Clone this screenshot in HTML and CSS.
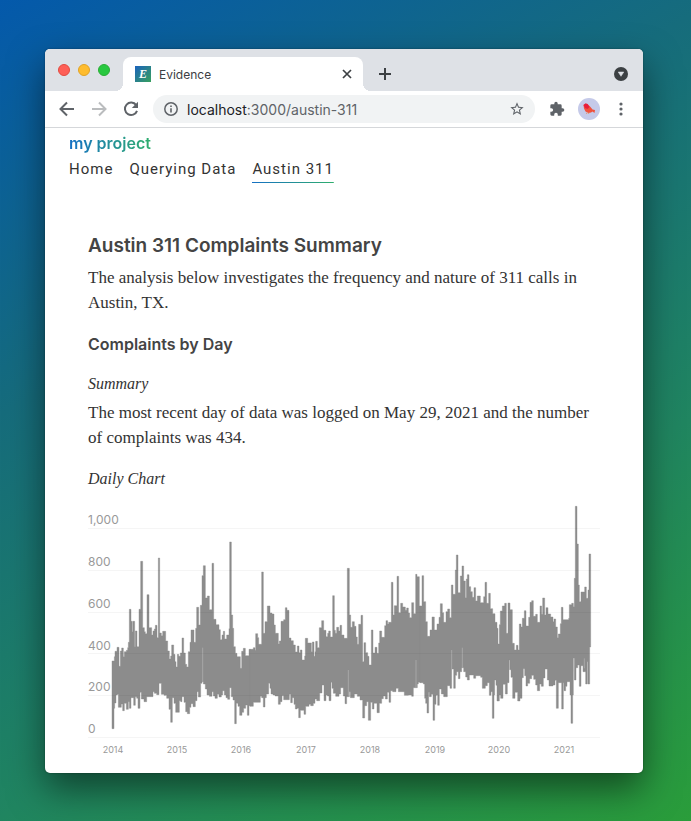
FILE: index.html
```html
<!DOCTYPE html>
<html lang="en">
<head>
<meta charset="utf-8">
<meta name="viewport" content="width=device-width, initial-scale=1">
<title>Evidence</title>
<link rel="stylesheet" href="styles.css">
</head>
<body>
<div class="window">
  <header class="chrome">
    <div class="tabstrip">
      <div class="lights"><span class="light red"></span><span class="light amber"></span><span class="light green"></span></div>
      <div class="tab">
        <span class="favicon">E</span>
        <span class="tab-title">Evidence</span>
        <button class="icon-btn close" aria-label="Close tab"><svg width="10" height="10" viewBox="0 0 10 10"><path d="M1 1l8 8M9 1l-8 8" stroke="#3c4043" stroke-width="1.7"/></svg></button>
      </div>
      <button class="icon-btn plus" aria-label="New tab"><svg width="14" height="14" viewBox="0 0 14 14"><path d="M7 1v12M1 7h12" stroke="#3c4043" stroke-width="2"/></svg></button>
      <button class="icon-btn tab-search" aria-label="Search tabs"><svg width="14" height="14" viewBox="0 0 14 14"><circle cx="7" cy="7" r="7" fill="#3c4043"/><path d="M4.200 5h5.600L7 9.300z" fill="#dee1e6" stroke="#dee1e6" stroke-linejoin="round" stroke-width=".5"/></svg></button>
    </div>
    <div class="toolbar">
      <button class="icon-btn" aria-label="Back"><svg width="16" height="16" viewBox="0 0 16 16" fill="none" stroke="#5f6368" stroke-width="2"><path d="M15 8H2.500M8 1.500L1.500 8 8 14.500"/></svg></button>
      <button class="icon-btn" aria-label="Forward"><svg width="16" height="16" viewBox="0 0 16 16" fill="none" stroke="#babcbe" stroke-width="2"><path d="M1 8h12.500M8 1.500L14.500 8 8 14.500"/></svg></button>
      <button class="icon-btn" aria-label="Reload"><svg width="16" height="16" viewBox="0 0 16 16"><path d="M13.200 4.200A6.200 6.200 0 1 0 14 9.800" fill="none" stroke="#5f6368" stroke-width="2"/><path d="M15 .8V7H8.800z" fill="#5f6368"/></svg></button>
      <div class="address">
        <svg width="14" height="14" viewBox="0 0 14 14"><circle cx="7" cy="7" r="6.200" fill="none" stroke="#5f6368" stroke-width="1.500"/><path d="M7 6.200v4.300M7 3.400v1.600" stroke="#5f6368" stroke-width="1.600"/></svg>
        <span class="url">localhost<span class="url-path">:3000/austin-311</span></span>
        <button class="icon-btn" aria-label="Bookmark"><svg width="16" height="16" viewBox="0 0 24 24"><path fill="#5f6368" d="M22 9.240l-7.190-.62L12 2 9.190 8.630 2 9.240l5.460 4.730L5.820 21 12 17.270 18.180 21l-1.630-7.030L22 9.240zM12 15.400l-3.760 2.270 1-4.280-3.320-2.880 4.380-.38L12 6.100l1.710 4.040 4.380.38-3.320 2.880 1 4.280L12 15.400z"/></svg></button>
      </div>
      <button class="icon-btn" aria-label="Extensions"><svg width="16" height="16" viewBox="0 0 24 24"><path fill="#5f6368" d="M20.500 11H19V7a2 2 0 0 0-2-2h-4V3.500a2.500 2.500 0 0 0-5 0V5H4a2 2 0 0 0-2 2v3.800h1.500a2.700 2.700 0 0 1 0 5.400H2V20a2 2 0 0 0 2 2h3.800v-1.500a2.700 2.700 0 0 1 5.400 0V22H17a2 2 0 0 0 2-2v-4h1.500a2.500 2.500 0 0 0 0-5z"/></svg></button>
      <button class="icon-btn avatar" aria-label="Profile"><svg width="22" height="22" viewBox="0 0 22 22"><circle cx="11" cy="11" r="11" fill="#c5cae9"/><path d="M5.500 7l2-1.500 2 .5 3 3 2 2.500 2.500.5-.5 3-2-1.500-1.500 1-2.500.5-3-1.500-1.500-3z" fill="#f0523c"/><path d="M5.500 7l2-1.500 2 .5 2 3-2 2-2.500-1z" fill="#e81c3c"/><path d="M9 14.500l-.5 1.500M11 14.500l-.5 1.500" stroke="#e58a5b" stroke-width=".8"/></svg></button>
      <button class="icon-btn" aria-label="Menu"><svg width="16" height="16" viewBox="0 0 16 16" fill="#5f6368"><circle cx="8" cy="3" r="1.600"/><circle cx="8" cy="8" r="1.600"/><circle cx="8" cy="13" r="1.600"/></svg></button>
    </div>
  </header>
  <div class="site-header">
    <a class="brand" href="#">my project</a>
    <nav class="nav">
      <a href="#">Home</a>
      <a href="#">Querying Data</a>
      <a class="active" href="#" aria-current="page">Austin 311</a>
    </nav>
  </div>
  <main class="article">
    <h1>Austin 311 Complaints Summary</h1>
    <p>The analysis below investigates the frequency and nature of 311 calls in Austin, TX.</p>
    <h2>Complaints by Day</h2>
    <h3>Summary</h3>
    <p>The most recent day of data was logged on May 29, 2021 and the number of complaints was 434.</p>
    <h3>Daily Chart</h3>
    <svg class="chart" viewBox="0 0 512 262" role="img" aria-label="Daily complaints, 2014 to 2021">
      <g transform="translate(-8 0) scale(.33333)" fill="#8c8c8c" stroke="#8c8c8c" stroke-width="1.200" stroke-linejoin="round">
        <path d="M96 498H103V485H105V469H111V457H117V514H121V468H125V459H130V485H133V470H139V466H143V458H145V442H148V343H153V379H157V410H159V379H164V455H166V408H171V455H177V343H182V199H188V398H193V410H196V416H201V299H207V398H215V420H219V408H223V402H226V391H231V428H235V189H239V414H244V422H248V409H257V438H263V468H268V492H272V483H275V450H281V478H285V500H288V516H292V478H296V484H301V474H306V429H311V474H316V508H320V516H325V470H330V442H333V405H342V442H347V400H350V337H356V390H361V331H366V242H370V212H376V309H382V303H388V344H396V205H401V373H408V389H417V404H421V434H426V420H430V409H434V432H440V420H447V401H449V141H454V360H458V400H461V455H466V475H471V485H481V520H485V469H490V460H496V482H507V463H511V632H507V661H502V630H497V640H491V652H486V661H479V634H474V625H469V686H464V615H459V605H454V578H449V613H443V608H438V600H433V587H428V600H424V606H417V598H412V610H405V603H400V590H396V604H388V600H381V582H376V567H370V560H366V565H362V606H355V590H351V617H346V635H339V626H333V637H329V656H322V650H317V622H312V605H306V620H302V617H298V652H287V625H282V608H277V682H272V643H267V610H260V601H252V598H244V565H237V599H230V595H223V590H219V605H200V620H192V612H184V592H180V640H174V610H170V605H166V631H161V608H153V640H148V620H145V643H139V625H133V647H128V627H124V637H115V598H112V600H108V624H104V640H102V701H96Z"/>
        <path transform="translate(510 0)" d="M0 463H10V458H15V466H17V416H23V428H26V448H35V231H40V415H45V380H52V333H60V354H66V357H72V390H76V415H85V447H88V438H93V379H101V374H106V338H111V346H117V429H123V437H130V450H136V471H142V453H147V473H151V465H156V495H164V483H166V430H173V444H184V470H187V441H192V484H195V470H197V439H202V458H208V398H215V377H221V406H228V425H233V415H236V408H241V426H248V302H253V406H256V415H260V397H266V408H270V391H275V420H282V430H292V220H298V360H302V397H307V380H313V394H318V426H322V448H326V388H333V361H338V500H342V443H347V473H353V484H357V510H364V405H369V474H375V457H381V475H386V444H389V408H395V427H404V392H408V377H413V387H416V382H424V262H429V360H433V332H441V244H446V353H452V325H458V336H466V346H470V339H475V354H479V368H485V323H491V356H497V238H501V245H508V333H511V562H505V567H502V578H490V604H485V600H475V601H463V590H445V580H438V590H428V587H422V622H417V592H412V612H406V603H400V611H395V625H388V653H381V625H372V642H367V622H362V676H355V620H350V632H344V669H338V615H330V604H322V597H313V608H301V590H298V605H290V626H285V603H280V578H272V597H267V604H257V595H250V580H246V562H243V617H237V603H232V600H228V617H222V570H216V594H209V617H200V612H195V625H190V632H182V628H177V634H167V658H162V646H151V668H146V640H141V642H136V628H132V608H127V623H122V598H118V614H101V602H96V620H91V628H85V603H75V600H69V597H63V580H60V565H56V597H49V608H45V636H40V608H35V604H31V622H10V634H0Z"/>
        <path transform="translate(1020 0)" d="M0 333H6V242H11V320H17V380H22V424H30V405H36V366H43V405H51V387H57V367H61V326H67V353H71V382H78V350H83V342H89V368H94V270H99V298H106V225H109V180H114V293H121V243H126V213H131V258H136V308H139V252H142V239H147V275H152V290H157V307H162V278H167V318H172V303H181V323H191V305H195V262H200V325H206V295H211V341H218V356H225V382H231V400H234V447H238V389H241V348H247V333H254V325H259V415H264V324H270V344H277V445H283V465H289V451H294V465H298V387H303V396H307V370H313V347H318V393H326V367H330V322H335V317H340V364H347V358H352V382H360V333H365V358H368V309H374V360H378V338H384V357H392V366H399V380H402V372H407V396H412V428H415V417H421V386H424V337H429V374H446V370H448V329H455V325H460V335H463V250H466V34H471V147H475V270H478V320H483V291H494V276H499V310H504V285H507V177H512V456H509V567H504V500H502V567H497V530H489V512H483V574H478V510H473V518H468V555H463V490H460V600H458V685H453V600H450V560H441V574H437V587H432V563H430V642H425V563H415V640H409V556H405V570H399V573H387V555H382V522H375V549H370V574H364V567H359V587H352V570H347V553H341V541H335V551H329V565H323V573H318V542H314V521H310V548H306V610H300V618H293V592H285V610H278V547H273V524H269V495H267V563H262V597H256V568H249V610H242V600H238V618H231V571H228V555H224V600H222V670H217V590H213V601H208V563H202V572H196V580H187V547H182V542H167V550H161V540H148V555H142V546H137V530H131V518H125V530H120V551H115V530H110V541H106V580H101V522H95V580H90V572H82V605H71V597H64V582H58V631H53V601H48V628H44V676H39V598H34V605H28V592H26V654H21V625H17V610H14V567H10V563H0Z"/>
        <path stroke="#b4b4b4" stroke-width="2" d="M368 458V560M805 525V605M1008 495V578M1115 465V522M1147 458V518M1481 490V530M1513 490V520"/>
      </g>
      <path class="grid" d="M0 33.500H512M0 75.500H512M0 117.500H512M0 158.500H512M0 200.500H512M0 242.500H512"/>
      <g class="y-labels"><text x="0" y="29">1,000</text><text x="0" y="71">800</text><text x="0" y="113">600</text><text x="0" y="155">400</text><text x="0" y="196">200</text><text x="0" y="238">0</text></g>
      <g class="x-labels"><text x="25" y="258">2014</text><text x="89" y="258">2015</text><text x="153" y="258">2016</text><text x="218" y="258">2017</text><text x="282" y="258">2018</text><text x="347" y="258">2019</text><text x="411" y="258">2020</text><text x="476" y="258">2021</text></g>
    </svg>
  </main>
</div>
</body>
</html>
```
FILE: styles.css
```css
* { box-sizing: border-box; }

body {
  margin: 0;
  min-height: 100vh;
  padding: 49px 48px 48px 45px;
  background: linear-gradient(150deg, #0459ab 0%, #166c7c 34%, #208560 67%, #2a9d3a 100%);
  font-family: Inter, "Liberation Sans", sans-serif;
  color: #333;
}

a { color: inherit; text-decoration: none; }

.window {
  background: #fff;
  border-radius: 5px;
  box-shadow: 0 16px 36px rgba(0, 0, 0, .5), 0 0 2px rgba(0, 0, 0, .4);
  padding-bottom: 16px;
}

.chrome { border-bottom: 1px solid #d5d7da; }

.tabstrip {
  display: flex;
  align-items: flex-end;
  height: 42px;
  padding-right: 15px;
  background: #dee1e6;
  border-radius: 5px 5px 0 0;
}

.lights { display: flex; gap: 8px; padding: 0 13px 15px; }
.light { width: 12px; height: 12px; border-radius: 50%; border: 1px solid; }
.red { background: #fe5f57; border-color: #e24b41; }
.amber { background: #febc2e; border-color: #e1a325; }
.green { background: #28c840; border-color: #2aae35; }

.tab {
  position: relative;
  display: flex;
  align-items: center;
  width: 240px;
  height: 34px;
  padding: 0 12px;
  gap: 8px;
  background: #fff;
  border-radius: 8px 8px 0 0;
  font-size: 12px;
}
/* flared feet on both sides of the active tab */
.tab::before,
.tab::after {
  content: "";
  position: absolute;
  bottom: 0;
  width: 8px;
  height: 8px;
}
.tab::before { right: 100%; background: radial-gradient(circle at 0 0, transparent 8px, #fff 8px); }
.tab::after { left: 100%; background: radial-gradient(circle at 100% 0, transparent 8px, #fff 8px); }

.favicon {
  width: 16px;
  height: 16px;
  background: linear-gradient(135deg, #1b62bd, #37a05d);
  color: #fff;
  font: italic bold 12px/16px "Liberation Serif", serif;
  text-align: center;
}
.tab-title { flex: 1; color: #3c4043; }

.icon-btn {
  display: flex;
  align-items: center;
  justify-content: center;
  padding: 0;
  border: 0;
  background: none;
}
.close { width: 8px; }
.close svg { flex: none; }
.plus { height: 34px; margin-left: 15px; }
.tab-search { height: 34px; margin-left: auto; }

.toolbar {
  display: flex;
  align-items: center;
  height: 36px;
  padding: 0 14px;
  gap: 16px;
}
.address {
  flex: 1;
  display: flex;
  align-items: center;
  height: 28px;
  margin: 0 -2px;
  padding: 0 10px 0 11px;
  gap: 9px;
  border-radius: 14px;
  background: #f1f3f4;
  font-size: 14px;
}
.url { flex: 1; color: #202124; }
.url-path { color: #5f6368; }
.avatar { margin: 0 -3px; }

.site-header { padding: 5px 24px 0; }
.brand {
  display: inline-block;
  background: linear-gradient(90deg, #1570c4, #2fae6d);
  background-clip: text;
  -webkit-background-clip: text;
  color: transparent;
  font-size: 16px;
  line-height: 20px;
  font-weight: 600;
}
.nav {
  display: flex;
  gap: 16px;
  margin-top: 6px;
  font-family: Roboto, "Liberation Sans", sans-serif;
  font-size: 15px;
  line-height: 20px;
  letter-spacing: 1px;
}
.nav a { padding-bottom: 4px; }
.nav .active { background: linear-gradient(90deg, #1570c4, #2fae6d) bottom / 100% 1px no-repeat; }

.article { padding: 51px 43px 0; }
h1, h2, h3, p { margin: 0; }
h1 { font-size: 19px; line-height: 24px; font-weight: 600; color: #444; margin-bottom: 7px; }
h2 { font-size: 16px; line-height: 24px; font-weight: 600; color: #444; margin: 17px 0 15px; }
p { font-family: "Liberation Serif", serif; font-size: 17px; line-height: 25px; }
h3 { font-family: "Liberation Serif", serif; font-size: 16px; line-height: 25px; font-weight: 400; font-style: italic; margin-bottom: 4px; }
p + h3 { margin: 16px 0 4px; }

.chart { display: block; width: 100%; overflow: visible; }
.grid { stroke: #000; stroke-opacity: .04; fill: none; }
.y-labels { font-size: 12px; fill: #999; }
.x-labels { font-size: 9px; fill: #999; text-anchor: middle; }
```
